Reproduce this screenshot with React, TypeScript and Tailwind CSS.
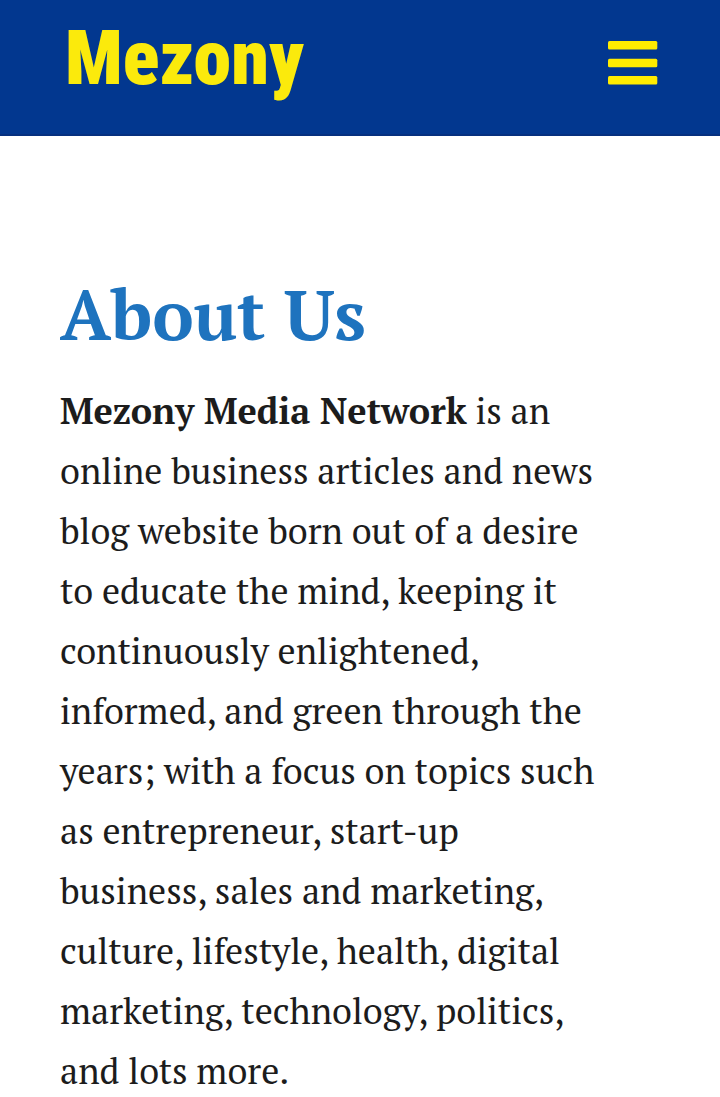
export default function App() {
  return (
    <div className="min-h-screen bg-white font-['PT_Serif','Noto_Serif','Liberation_Serif',serif] text-[#1c1c1c]">
      <header className="flex items-start justify-between border-b-2 border-[#06307f] bg-[#02378f] pt-[18px] pr-[62px] pb-9 pl-[65px]">
        <a href="#" className="font-['Roboto_Condensed','Roboto',sans-serif] text-[76px] leading-[80px] font-black text-[#fbea0c]">
          Mezony
        </a>
        <button type="button" aria-label="Menu" className="mt-[23px] text-[#ffec00]">
          <svg className="block" width="50" height="44" viewBox="0 0 50 44" fill="currentColor">
            <rect x="0" y="0" width="49.3" height="8.5" rx="1.5" />
            <rect x="0" y="17.7" width="49.3" height="8.5" rx="1.5" />
            <rect x="0" y="35" width="49.3" height="8.5" rx="1.5" />
          </svg>
        </button>
      </header>
      <main className="pt-[140px] pr-[120px] pl-[60px]">
        <h1 className="text-[70px] leading-[76px] font-bold text-[#1e73be]">About Us</h1>
        <p className="mt-[29px] text-[36px] leading-[60px]">
          <strong>Mezony Media Network</strong> is an online business articles and news blog
          website born out of a desire to educate the mind, keeping it continuously enlightened,
          informed, and green through the years; with a focus on topics such as entrepreneur,
          start-up business, sales and marketing, culture, lifestyle, health, digital marketing,
          technology, politics, and lots more.
        </p>
      </main>
    </div>
  );
}
